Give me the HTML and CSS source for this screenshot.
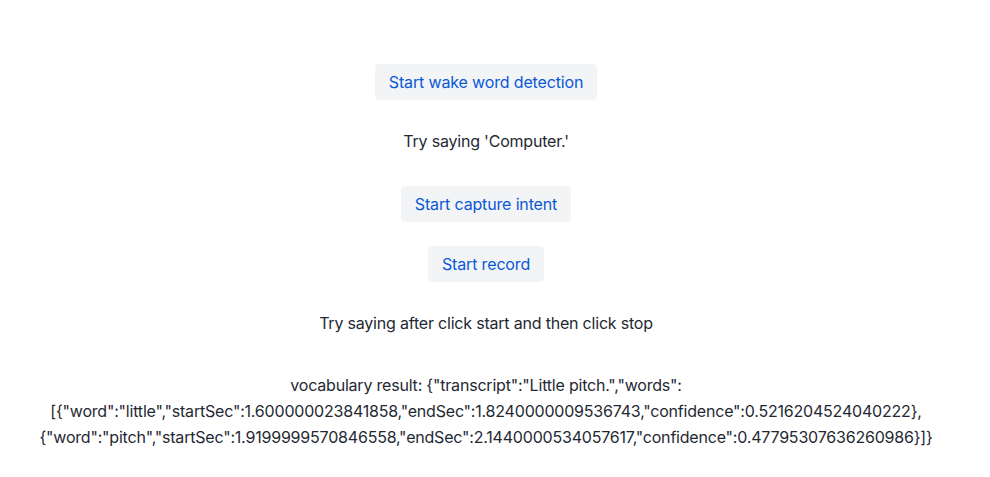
FILE: index.html
```html
<!DOCTYPE html>
<html>
<head>
<meta charset="utf-8">
<link rel="stylesheet" href="styles.css">
</head>
<body>
<main class="page">
  <button class="btn btn-wake">Start wake word detection</button>
  <p class="hint hint-wake">Try saying 'Computer.'</p>
  <button class="btn btn-intent">Start capture intent</button>
  <button class="btn btn-record">Start record</button>
  <p class="hint hint-record">Try saying after click start and then click stop</p>
  <p class="result">vocabulary result: {"transcript":"Little pitch.","words":<br>[{"word":"little","startSec":1.600000023841858,"endSec":1.8240000009536743,"confidence":0.5216204524040222},<br>{"word":"pitch","startSec":1.9199999570846558,"endSec":2.1440000534057617,"confidence":0.47795307636260986}]}</p>
</main>
</body>
</html>
```

FILE: styles.css
```css
html, body {
  margin: 0;
  padding: 0;
  background: #ffffff;
}
body {
  font-family: Inter, "Noto Sans", sans-serif;
  font-size: 16px;
  letter-spacing: -0.2px;
  color: #1f2933;
}
.page {
  display: flex;
  flex-direction: column;
  align-items: center;
  padding: 64px 18px 0 0;
}
.btn {
  font-family: inherit;
  font-size: 16px;
  letter-spacing: -0.15px;
  line-height: 20px;
  color: #0a58d8;
  background: #f3f4f6;
  border: none;
  border-radius: 4px;
  padding: 8px 14px;
  height: 36px;
  cursor: pointer;
}
.hint {
  margin: 0;
  line-height: 24px;
}
.hint-wake {
  margin-top: 29px;
}
.btn-intent {
  margin-top: 33px;
}
.btn-record {
  margin-top: 24px;
}
.hint-record {
  margin-top: 29px;
}
.result {
  margin: 37px 0 0;
  line-height: 26px;
  text-align: center;
}
```
